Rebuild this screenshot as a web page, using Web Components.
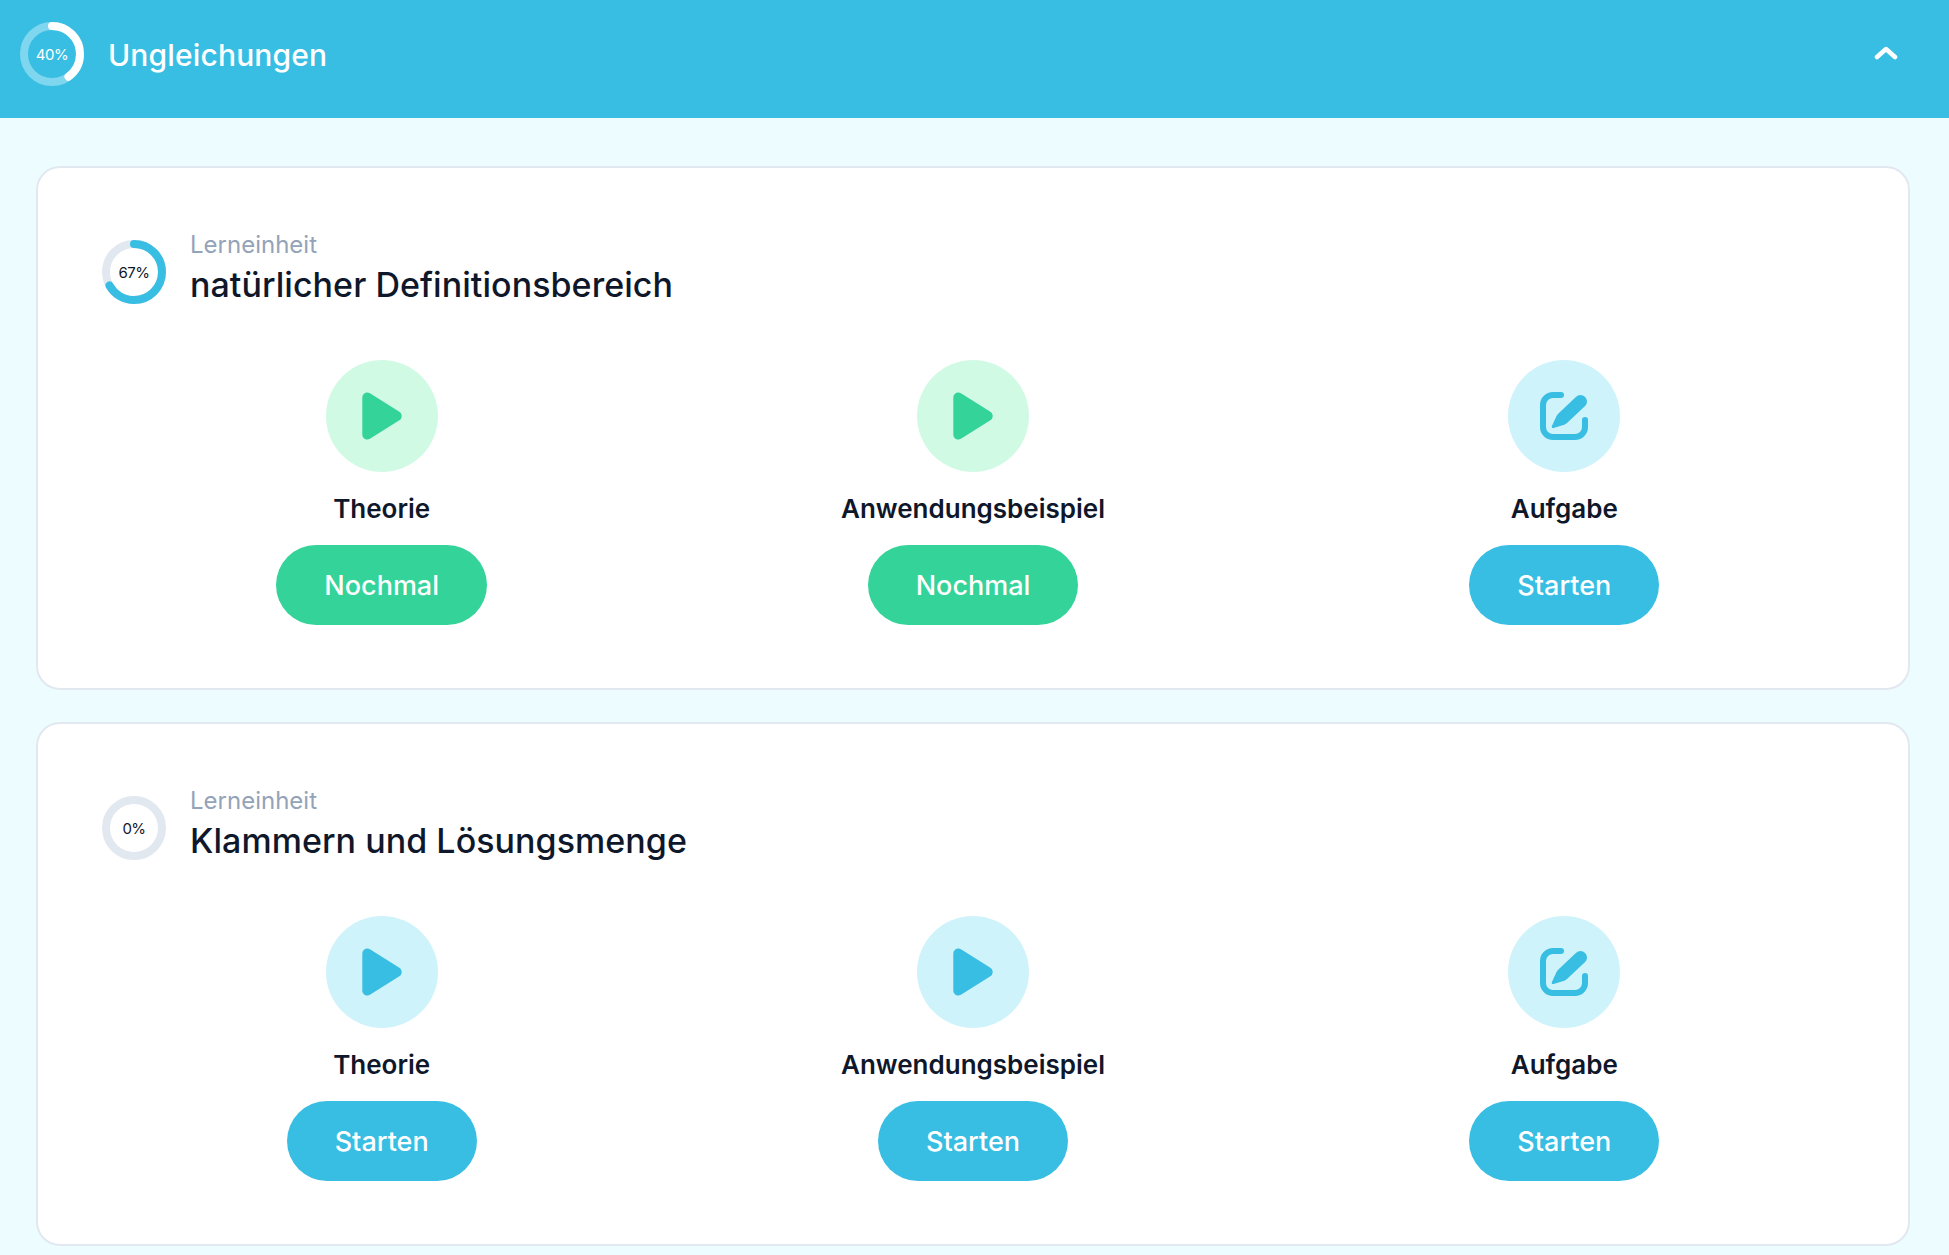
<!DOCTYPE html>
<html lang="de">
<head>
<meta charset="utf-8">
<title>Ungleichungen</title>
<style>
  html, body { margin: 0; padding: 0; }
  body {
    background: #ecfcff;
    font-family: Inter, "Open Sans", sans-serif;
    color: #0f172a;
    min-height: 1255px;
  }
</style>
</head>
<body>
<chapter-panel title-text="Ungleichungen" progress="40">
  <unit-card name="natürlicher Definitionsbereich" progress="67">
    <unit-step kind="video" state="done" label="Theorie"></unit-step>
    <unit-step kind="video" state="done" label="Anwendungsbeispiel"></unit-step>
    <unit-step kind="task" state="open" label="Aufgabe"></unit-step>
  </unit-card>
  <unit-card name="Klammern und Lösungsmenge" progress="0">
    <unit-step kind="video" state="open" label="Theorie"></unit-step>
    <unit-step kind="video" state="open" label="Anwendungsbeispiel"></unit-step>
    <unit-step kind="task" state="open" label="Aufgabe"></unit-step>
  </unit-card>
</chapter-panel>

<script>
class progressRing extends HTMLElement {
  constructor() {
    super();
    this.shadowDOM = this.attachShadow({ mode: 'open' });
  }

  connectedCallback() {
    const value = Number(this.getAttribute('value') || 0);
    const dash = value > 0 ? `<circle class="bar" cx="32" cy="32" r="28" pathLength="100" stroke-dasharray="${value} 100" transform="rotate(-90 32 32)" />` : '';
    this.shadowDOM.innerHTML = `
    <style>
    :host {
        display: block;
        position: relative;
        width: 64px;
        height: 64px;
        flex: none;
    }
    svg {
        display: block;
        width: 64px;
        height: 64px;
    }
    circle {
        fill: none;
        stroke-width: 8;
    }
    .track { stroke: var(--ring-track, #e2e8f0); }
    .bar {
        stroke: var(--ring-bar, #38bde3);
        stroke-linecap: round;
    }
    span {
        position: absolute;
        inset: 0;
        display: flex;
        align-items: center;
        justify-content: center;
        font-size: 15px;
        letter-spacing: -.5px;
        color: var(--ring-text, #0f172a);
    }
    </style>
    <svg viewBox="0 0 64 64"><circle class="track" cx="32" cy="32" r="28" />${dash}</svg>
    <span>${value}%</span>`;
  }
}

class chapterPanel extends HTMLElement {
  constructor() {
    super();
    this.shadowDOM = this.attachShadow({ mode: 'open' });
  }

  connectedCallback() {
    this.shadowDOM.innerHTML = `
    <style>
    :host { display: block; }
    header {
        display: flex;
        align-items: center;
        gap: 24px;
        height: 118px;
        box-sizing: border-box;
        padding: 0 51px 10px 20px;
        background: #38bde3;
        color: #fff;
        --ring-track: #7fd6ef;
        --ring-bar: #fff;
        --ring-text: #fff;
    }
    h2 {
        flex: 1;
        margin: 2px 0 0;
        font-size: 30px;
        font-weight: 500;
        letter-spacing: .15px;
    }
    svg {
        display: block;
        margin-top: -2px;
    }
    .list {
        display: flex;
        flex-direction: column;
        gap: 32px;
        padding: 48px 39px 9px 36px;
    }
    </style>
    <header>
      <progress-ring value="${this.getAttribute('progress')}"></progress-ring>
      <h2>${this.getAttribute('title-text')}</h2>
      <svg width="24" height="16" viewBox="0 0 24 16" fill="none" stroke="#fff" stroke-width="4.5" stroke-linecap="round" stroke-linejoin="round"><path d="M3 12 L12 4 L21 12" /></svg>
    </header>
    <div class="list"><slot></slot></div>`;
  }
}

class unitCard extends HTMLElement {
  constructor() {
    super();
    this.shadowDOM = this.attachShadow({ mode: 'open' });
  }

  connectedCallback() {
    this.shadowDOM.innerHTML = `
    <style>
    :host {
        display: block;
        box-sizing: border-box;
        height: 524px;
        padding: 66px 64px 62px;
        background: #fff;
        border: 2px solid #e2e8f0;
        border-radius: 24px;
    }
    .head {
        display: flex;
        align-items: center;
        gap: 24px;
        height: 76px;
        margin-bottom: 50px;
    }
    .text { margin-bottom: 7px; }
    small {
        display: block;
        margin-bottom: 2px;
        font-size: 24px;
        line-height: 30px;
        color: #94a3b8;
    }
    h3 {
        margin: 0;
        font-size: 34px;
        line-height: 46px;
        font-weight: 500;
        letter-spacing: .05px;
    }
    .steps {
        display: grid;
        grid-template-columns: repeat(3, 1fr);
        gap: 32px;
    }
    </style>
    <div class="head">
      <progress-ring value="${this.getAttribute('progress')}"></progress-ring>
      <div class="text"><small>Lerneinheit</small><h3>${this.getAttribute('name')}</h3></div>
    </div>
    <div class="steps"><slot></slot></div>`;
  }
}

class unitStep extends HTMLElement {
  constructor() {
    super();
    this.shadowDOM = this.attachShadow({ mode: 'open' });
  }

  connectedCallback() {
    const done = this.getAttribute('state') === 'done';
    const icon = this.getAttribute('kind') === 'task'
      ? `<svg width="48" height="48" viewBox="0 0 48 48" fill="none">
           <path d="M21 3 H13 A10 10 0 0 0 3 13 V35 A10 10 0 0 0 13 45 H35 A10 10 0 0 0 45 35 V28" stroke="currentColor" stroke-width="6" stroke-linecap="round" />
           <path fill="currentColor" d="M13.6 36 C12.4 36.4 11.4 35.4 11.8 34.2 L16.5 24 C17 23 17.6 22.2 18.4 21.4 L35.9 4.9 A6.5 6.5 0 0 1 45.1 14.1 L27 31 C26.2 31.8 25.2 32.3 24.2 32.7 Z" />
         </svg>`
      : `<svg width="48" height="48" viewBox="0 0 48 48"><path d="M9.3 5.5 L38.7 24 L9.3 42.5 Z" fill="currentColor" stroke="currentColor" stroke-width="10" stroke-linejoin="round" /></svg>`;
    this.shadowDOM.innerHTML = `
    <style>
    :host {
        display: flex;
        flex-direction: column;
        align-items: center;
        --main: ${done ? '#34d399' : '#38bde3'};
        --soft: ${done ? '#d1fae5' : '#cff3fa'};
    }
    .icon {
        display: flex;
        align-items: center;
        justify-content: center;
        width: 112px;
        height: 112px;
        border-radius: 50%;
        background: var(--soft);
        color: var(--main);
    }
    .label {
        margin: 17px 0 16px;
        font-size: 26px;
        line-height: 40px;
        font-weight: 600;
    }
    button {
        height: 80px;
        padding: 0 48px;
        border: 0;
        border-radius: 40px;
        background: var(--main);
        color: #fff;
        font: 500 27px Inter, "Open Sans", sans-serif;
        cursor: pointer;
    }
    </style>
    <div class="icon">${icon}</div>
    <div class="label">${this.getAttribute('label')}</div>
    <button type="button">${done ? 'Nochmal' : 'Starten'}</button>`;
  }
}

customElements.define('progress-ring', progressRing);
customElements.define('chapter-panel', chapterPanel);
customElements.define('unit-card', unitCard);
customElements.define('unit-step', unitStep);
</script>
</body>
</html>
